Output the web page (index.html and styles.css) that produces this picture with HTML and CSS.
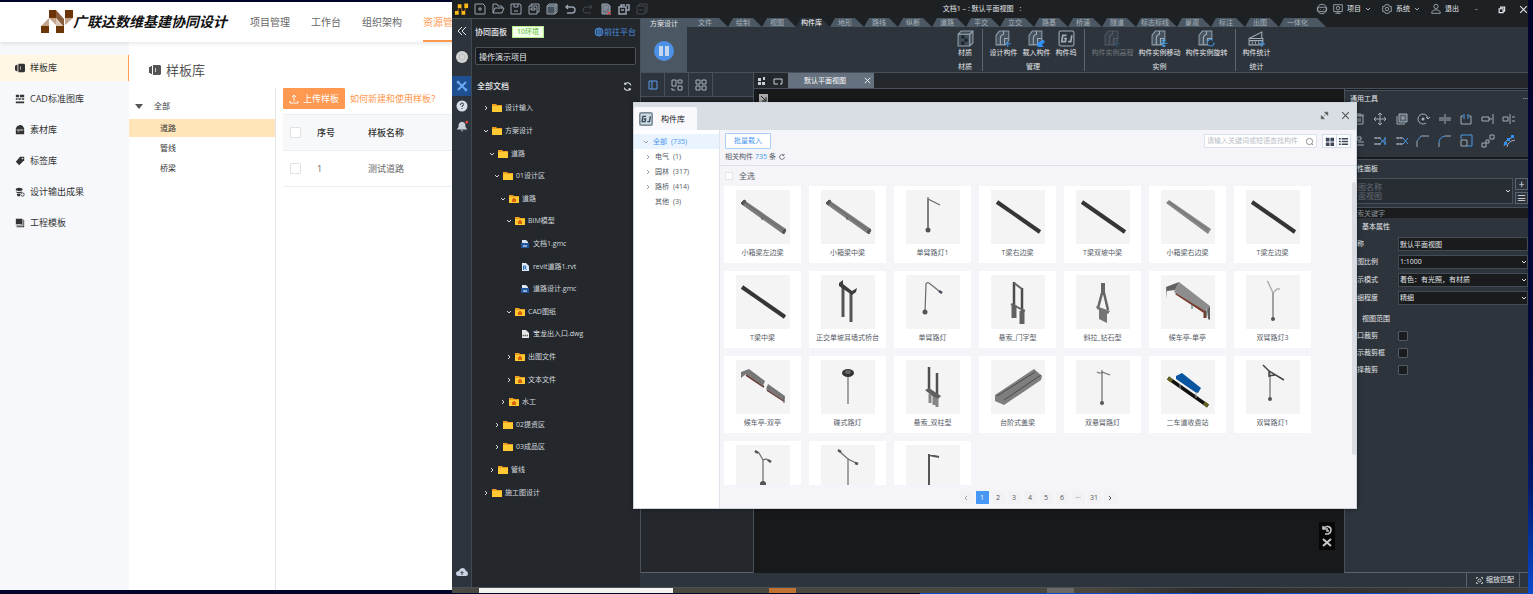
FILE: index.html
```html
<!DOCTYPE html>
<html lang="zh-CN">
<head>
<meta charset="utf-8">
<meta name="viewport" content="width=device-width, initial-scale=1">
<title>广联达数维基建协同设计</title>
<link rel="stylesheet" href="styles.css">
</head>
<body>
<svg class="defs" aria-hidden="true">
  <defs>
    <symbol id="down" viewBox="0 0 8 8"><path d="M2 3l2 2 2-2" class="s"/></symbol>
    <symbol id="right" viewBox="0 0 8 8"><path d="M3 2l2 2-2 2" class="s"/></symbol>
    <symbol id="left" viewBox="0 0 8 8"><path d="M5 2L3 4l2 2" class="s"/></symbol>
    <symbol id="close" viewBox="0 0 10 10"><path d="M2 2l6 6M8 2l-6 6" class="s"/></symbol>
    <symbol id="folder" viewBox="0 0 10 10"><path d="M0 1h4l1 1h5v7H0z" fill="#f0a020"/><path d="M0 3h10v6H0z" fill="#ffc933"/></symbol>
    <symbol id="lockfolder" viewBox="0 0 10 10"><path d="M0 1h4l1 1h5v7H0z" fill="#f0a020"/><path d="M0 3h10v6H0z" fill="#ffc933"/><path d="M3 5h4v3H3zM4 4h2v1H4z" fill="#d9650a"/></symbol>
    <symbol id="gmc" viewBox="0 0 8 10"><path d="M1 1h4l2 2v2H1z" fill="#dbe6f3"/><path d="M0 4h8v5H0z" fill="#1f569d"/><path d="M2 7h4" stroke="#fff" stroke-width="1"/></symbol>
    <symbol id="rvt" viewBox="0 0 8 10"><path d="M1 1h4l3 3v5H1z" fill="#dbe8f6"/><path d="M2.500 8V4h2q1 1 0 2h-2M4 6l1.500 2" stroke="#2a6fc0" fill="none"/></symbol>
    <symbol id="dwg" viewBox="0 0 8 10"><path d="M1 1h4l3 3v5H1z" fill="#e7e7e7"/><path d="M1.500 6.500h6" stroke="#666" stroke-width="1.500" stroke-dasharray="1.500 .5"/></symbol>
    <symbol id="gj" viewBox="0 0 16 16"><rect x="1" y="1" width="14" height="14" rx="1.500" class="s"/><path d="M8 5H4.500L3.500 11H7l.5-3H5.500M13 5l-1 6H9.500" class="s" stroke-width="1.600"/></symbol>
    <symbol id="cube" viewBox="0 0 16 16"><path d="M1 4l3-3h11v11l-3 3H1z" fill="#414d58" stroke="#909eab"/><path d="M1 4h11v11M12 4l3-3" class="s"/></symbol>
    <symbol id="part" viewBox="0 0 16 16"><path d="M1 5l3-4h9v9l-3 4H1z" fill="#46535f" stroke="#8e9caa"/><path d="M5 14V8q0-3 3-4V1M9 14V8h4" class="s"/></symbol>
    <symbol id="cube-check" viewBox="0 0 16 16"><use href="#cube"/><path d="M4 5h3v3H4zM7 8h3v3H7zM4 11h3v3H4z" fill="#1e252c"/></symbol>
    <symbol id="part-plus" viewBox="0 0 16 16"><use href="#part"/><path d="M12 10v6M9 13h6" stroke="#3d8fe0"/></symbol>
    <symbol id="part-load" viewBox="0 0 16 16"><use href="#part"/><path d="M9 10l2 2 3-3 2 2-3 3 2 2H9z" fill="#2f8ffb"/></symbol>
    <symbol id="part-move" viewBox="0 0 16 16"><use href="#part"/><path d="M12 9v7M8.500 12.500h7M10.500 10.500L12 9l1.500 1.500M10.500 14.500L12 16l1.500-1.500" stroke="#4aa0e8" fill="none"/></symbol>
    <symbol id="part-turn" viewBox="0 0 16 16"><use href="#part"/><circle cx="12" cy="12" r="3" stroke="#3d8fe0" fill="#2d343c" stroke-dasharray="7 2"/></symbol>
    <symbol id="stat" viewBox="0 0 16 16"><path d="M1 14V8h13v6zM1 8l12-6v6M4 11v2M7 11v2M10 11v2M1 10h13" class="s"/><path d="M13 10v6M10 13h6" stroke="#3d8fe0"/></symbol>
    <symbol id="refresh" viewBox="0 0 10 10"><path d="M2 6a3 3 0 0 0 5.500 1M8 4a3 3 0 0 0-5.500-1M7.500 8.500V7H6M2.500 1.500V3H4" class="s"/></symbol>
    <symbol id="reload" viewBox="0 0 10 10"><path d="M8 5a3 3 0 1 1-1-2.200M7.500 1v2h-2" class="s"/></symbol>
    <symbol id="album" viewBox="0 0 12 12"><path d="M4 1h7l1 1v8l-1 1H4zM2 2h1v8H2l-1-1V3zM0 3h1v6H0z" fill="currentColor"/><path d="M6 4h1v4H6z" fill="#fff" opacity=".7"/></symbol>
    <symbol id="globe" viewBox="0 0 10 10"><circle cx="5" cy="5" r="4" class="s"/><path d="M1 5h8M5 1v8M2 2.500q3 2 6 0M2 7.500q3-2 6 0M5 1q-4 4 0 8M5 1q4 4 0 8" class="s" stroke-width=".7"/></symbol>

    <symbol id="beam" viewBox="0 0 54 54"><path d="M8 10l42 29-3 5L5 14z" fill="#7b7b7b"/><path d="M8 12l39 28" stroke="#686868"/><path d="M5 13l3-3 2 1-3 4zM46 42l3-3 1 1-2 4zM26 27v3" fill="#555" stroke="#555"/></symbol>
    <symbol id="beam-light" viewBox="0 0 54 54"><path d="M8 10l42 29-3 5L5 13z" fill="#858585"/><path d="M8 12l39 28" stroke="#757575"/></symbol>
    <symbol id="tbeam" viewBox="0 0 54 54"><path d="M6 12l43 30" stroke="#353535" stroke-width="4"/></symbol>
    <symbol id="lamp1" viewBox="0 0 54 54"><path d="M22 7v33M22 9l12 6" class="p"/><path d="M22 9v31" class="p" stroke-width="2"/><circle cx="22" cy="40" r="2.500" fill="#555"/></symbol>
    <symbol id="lamp2" viewBox="0 0 54 54"><path d="M19 37l1-28q1-2 3-1l10 8" class="p"/><path d="M33 16l3 2" stroke="#445" stroke-width="2.500"/><circle cx="19" cy="37" r="2.500" fill="#555"/></symbol>
    <symbol id="pier" viewBox="0 0 54 54"><path d="M22 12v30M30 18v29" stroke="#555" stroke-width="3"/><path d="M18 8l4-3v4l9 7 5-3-1 4-4 3-13-9z" fill="#3d3d3d"/></symbol>
    <symbol id="gate" viewBox="0 0 54 54"><path d="M23 7v24M31 13v24" stroke="#4b4b4b" stroke-width="2.500"/><path d="M23 8l8 6M20 29l14 7" stroke="#666" stroke-width="2"/><path d="M23 30v13M31 36v13" stroke="#606060" stroke-width="5"/></symbol>
    <symbol id="stay" viewBox="0 0 54 54"><path d="M27 8v12" stroke="#666" stroke-width="4"/><path d="M26 18l-4 15M28 18l4 17" stroke="#666" stroke-width="2.500" fill="none"/><path d="M20 31l14 5-2 3-11-5zM23 35l8 3v10l-8-4z" fill="#757575"/></symbol>
    <symbol id="shelter" viewBox="0 0 54 54"><path d="M15 18l29 19v6" fill="none" stroke="#793b2b" stroke-width="3"/><path d="M18 7l31 24-5 5L13 17z" fill="#8d8d8d"/><path d="M5 12l13-5-4 8-8 1v8zM46 34l3-3v14l-2-1z" fill="#616161"/><path d="M31 30v4M45 35v6" stroke="#376b65"/></symbol>
    <symbol id="twin3" viewBox="0 0 54 54"><path d="M27 18l-5-11-1-1M27 18l4-4h3" fill="none" stroke="#b0b0b0" stroke-width="1.500"/><path d="M27 18v26" class="p" stroke-width="2"/><circle cx="27" cy="44" r="2" fill="#555"/></symbol>
    <symbol id="shelter2" viewBox="0 0 54 54"><path d="M10 15l18 12M31 30l17 11" stroke="#6d3c30" stroke-width="2"/><path d="M5 12l8-3 16 12-2 5-17-12-5 4zM32 24l17 12-1 5-18-12z" fill="#777"/><path d="M48 37v6" stroke="#555"/></symbol>
    <symbol id="dish" viewBox="0 0 54 54"><path d="M27 16v28" class="p" stroke-width="2"/><ellipse cx="27" cy="13" rx="6" ry="4" fill="#343434"/><ellipse cx="27" cy="12" rx="3" ry="2" fill="#666"/></symbol>
    <symbol id="twoposts" viewBox="0 0 54 54"><path d="M23 7v25M31 13v23" stroke="#4f4f4f" stroke-width="2.500"/><path d="M19 30l4-2 12 8-4 4z" fill="#606060"/><path d="M24 34v9M28 37v8M31 38v9" stroke="#858585" stroke-width="3"/></symbol>
    <symbol id="steps" viewBox="0 0 54 54"><path d="M4 35l39-26 8 7-1 4-37 25-9-4z" fill="#7e7e7e"/><path d="M6 36l38-24M13 40l37-25" stroke="#4c4c4c"/></symbol>
    <symbol id="twin-h" viewBox="0 0 54 54"><path d="M26 10v33" class="p" stroke-width="2"/><path d="M26 13h-3l-2-1M26 12l8 3" class="p"/><circle cx="26" cy="43" r="2" fill="#555"/></symbol>
    <symbol id="toll" viewBox="0 0 54 54"><path d="M7 18l40 28" stroke="#111" stroke-width="3.500"/><path d="M7 18l4 3M43 43l4 3" stroke="#66641f" stroke-width="3.500"/><path d="M19 24v5M35 32v6" stroke="#999"/><path d="M15 16l6-3 19 15-3 5-3-1-19-13z" fill="#0a559f"/></symbol>
    <symbol id="twin1" viewBox="0 0 54 54"><path d="M24 13v25" class="p" stroke-width="2"/><path d="M17 5l6 6 15 9M23 11v5l6-1" fill="none" stroke="#444" stroke-width="1.500"/><circle cx="24" cy="39" r="2" fill="#555"/></symbol>
    <symbol id="twin-a" viewBox="0 0 54 54"><path d="M27 14v26M19 6l4 2 4 7 3-1 5 3" class="p"/><path d="M19 6l3 2M32 15l3 2" stroke="#555" stroke-width="2.500"/><circle cx="27" cy="39" r="3" fill="#555"/></symbol>
    <symbol id="twin-b" viewBox="0 0 54 54"><path d="M27 13v28M18 6l9 8 10 5" class="p"/><path d="M17 5l3 2M34 18l3 1" stroke="#555" stroke-width="2.500"/></symbol>
    <symbol id="lamp3" viewBox="0 0 54 54"><path d="M23 9v31M23 10l10 2" fill="none" stroke="#555" stroke-width="2"/></symbol>
  </defs>
</svg>

<main class="desktop">
<section class="site">
  <header class="site-head">
    <svg class="brand-mark" viewBox="0 0 32 24"><path d="M8 0h7v8H8zM24 0h8v8h-8zM0 16h8v7H0zM15 16h8v7h-8z" fill="#6b3508"/><path d="M8 8v8H0zM8 8h7v7zM24 8h8l-8 7z" fill="#c3a48c"/><path d="M15 0l8 9v7h-1l-7-8z" fill="#8a5e3c"/><path d="M15 8l7 8h-7z" fill="#dac7b8"/></svg>
    <h1 class="brand">广联达数维基建协同设计</h1>
    <nav class="site-nav"><a href="#">项目管理</a><a href="#">工作台</a><a href="#">组织架构</a><a href="#" class="on">资源管理</a></nav>
  </header>
  <div class="site-body">
    <nav class="site-side">
      <a href="#" class="on"><svg><use href="#album"/></svg>样板库</a>
      <a href="#"><svg viewBox="0 0 12 12"><path d="M1 1h4v3H1zM6 1h5v3H6zM1 5h2v2H1zM4 5h3v2H4zM8 5h3v2H8zM1 9h10v2H1z" fill="currentColor"/></svg>CAD标准图库</a>
      <a href="#"><svg viewBox="0 0 12 12"><path d="M3 1h6l2 3v7H1V4zM5 0h3v2H5z" fill="currentColor"/><path d="M2 6h8M4 8h1" stroke="#fff"/></svg>素材库</a>
      <a href="#"><svg viewBox="0 0 12 12"><path d="M6 1l5 0v4l-6 6-4-4z" fill="currentColor"/><circle cx="9" cy="3" r="1" fill="#fff"/></svg>标签库</a>
      <a href="#"><svg viewBox="0 0 12 12"><path d="M1 2q4-2 8 0v2q-4 2-8 0zM1 5q3 2 7 0v2q-3 1-6 0zM2 8h4v3H3z" fill="currentColor"/><circle cx="9" cy="9" r="2" fill="none" stroke="currentColor"/></svg>设计输出成果</a>
      <a href="#"><svg viewBox="0 0 12 12"><path d="M1 1h8v8H1zM10 2h1v9H2v-1h8z" fill="currentColor"/><path d="M1 8h7" stroke="#fff"/></svg>工程模板</a>
    </nav>
    <div class="site-main">
      <h2><svg><use href="#album"/></svg>样板库</h2>
      <div class="split">
        <ul class="cats"><li class="root"><svg viewBox="0 0 8 8"><path d="M0 2h8L4 7z" fill="#555"/></svg>全部</li><li class="on">道路</li><li>管线</li><li>桥梁</li></ul>
        <div class="templates">
          <div class="actions"><button><svg viewBox="0 0 10 10"><path d="M5 7V1M3 3l2-2 2 2M1 7v2h8V7" class="s"/></svg>上传样板</button><a href="#">如何新建和使用样板？</a></div>
          <table>
            <thead><tr><th class="pick"><input type="checkbox" aria-label="全选"></th><th class="num">序号</th><th>样板名称</th></tr></thead>
            <tbody><tr><td><input type="checkbox" aria-label="测试道路"></td><td>1</td><td>测试道路</td></tr></tbody>
          </table>
        </div>
      </div>
    </div>
  </div>
</section>

<section class="app">
  <header class="titlebar">
    <div class="quick">
      <svg class="logo" viewBox="0 0 16 14"><path d="M3 11l3-7 4 7 4-7" stroke="#b8740b" fill="none"/><path d="M1 9h4v4H1zM4 2h4v4H4zM8 9h4v4H8zM11 1h4v5h-4z" fill="#fbb91b"/></svg>
      <button aria-label="新建"><svg viewBox="0 0 14 14"><path d="M2 2h8l2 2v8H2zM5 7h4M7 5v4" class="s"/></svg></button>
      <button aria-label="打开"><svg viewBox="0 0 14 14"><path d="M2 11V2h4l1 2h4v2M2 11l2-5h9l-2 5z" class="s"/></svg></button>
      <button aria-label="保存"><svg viewBox="0 0 14 14"><path d="M2 2h9l1 1v9H2zM5 2v3h4V2M5 9h4" class="s"/></svg></button>
      <button aria-label="另存为"><svg viewBox="0 0 14 14"><path d="M2 4h8v8H2zM4 4V2h8v8h-2M4 6h4v2H4z" class="s"/></svg></button>
      <button aria-label="全部保存"><svg viewBox="0 0 14 14"><path d="M2 4l2-2h8v8l-2 2H2z" fill="#46525c"/><path d="M2 4l2-2h8v8l-2 2H2zM2 4h8v8M10 4l2-2" class="s"/></svg></button>
      <button aria-label="撤销"><svg viewBox="0 0 14 14"><path d="M3 5h6q3 0 3 3t-3 3H4M5 3L3 5l2 2" class="s" stroke-width="1.400"/></svg></button>
      <button aria-label="重做" class="off"><svg viewBox="0 0 14 14"><path d="M11 5H5q-3 0-3 3t3 3h5M9 3l2 2-2 2" class="s"/></svg></button>
      <button aria-label="关闭文档"><svg viewBox="0 0 14 14"><path d="M3 2h6l2 2v8H3z" fill="#6c7883"/><path d="M3 2h6l2 2v8H3zM5 5h4M5 7h3" class="s"/><path d="M8 9l4 4M12 9l-4 4" stroke="#d84b4b"/></svg></button>
      <button aria-label="上传"><svg viewBox="0 0 14 14"><path d="M2 5h7v7H2zM4 5V3h4M9 8h3V3H9M4 8h3" class="s" stroke-width="1.500"/></svg></button>
      <button aria-label="同步" class="off"><svg viewBox="0 0 14 14"><path d="M2 4h8v8H2zM4 4V2h8v8h-2M4 8h4" class="s"/></svg></button>
    </div>
    <div class="doc-title">文档1 – : 默认平面视图 <span>:</span></div>
    <div class="sys">
      <button aria-label="助手"><svg viewBox="0 0 14 14"><circle cx="7" cy="7" r="5.500" class="s"/><rect x="2" y="5" width="10" height="5" rx="2" class="s"/><path d="M5 7v1M9 7v1" class="s"/></svg></button>
      <button><svg viewBox="0 0 14 14"><path d="M2 2h10v8H2zM4 12h6M7 10v2" class="s"/><circle cx="7" cy="6" r="2" class="s"/></svg>项目<svg class="chev"><use href="#down"/></svg></button>
      <button><svg viewBox="0 0 14 14"><path d="M5 2h4l1 2h2v6h-2l-1 2H5l-1-2H2V4h2z" class="s"/><circle cx="7" cy="7" r="2" class="s"/></svg>系统<svg class="chev"><use href="#down"/></svg></button>
      <button><svg viewBox="0 0 14 14"><circle cx="7" cy="4" r="2.500" class="s"/><path d="M2 12q0-4 5-4t5 4z" class="s"/></svg>退出</button>
      <button class="win" aria-label="最小化">-</button>
      <button class="win" aria-label="还原"><svg viewBox="0 0 14 14"><path d="M4 6h5v5H4zM6 6V4h5v5H9" class="s" stroke-width="1.500"/></svg></button>
      <button class="win" aria-label="关闭"><svg><use href="#close"/></svg></button>
    </div>
  </header>

  <div class="app-body">
    <nav class="rail">
      <button aria-label="收起"><svg viewBox="0 0 12 12"><path d="M6 2L2 6l4 4M10 2L6 6l4 4" class="s"/></svg></button>
      <button aria-label="用户" class="avatar"><svg viewBox="0 0 12 12"><circle cx="6" cy="6" r="6" fill="#d3d3d3"/><circle cx="6" cy="6" r="3" fill="none" stroke="#bbb"/></svg></button>
      <button aria-label="协同" class="on"><svg viewBox="0 0 12 12"><path d="M2 2l8 8M10 2l-8 8M1 3l2-2M9 11l2-2" stroke="#69a9f5" stroke-width="2"/></svg></button>
      <button aria-label="帮助"><svg viewBox="0 0 12 12"><circle cx="6" cy="6" r="5.500" fill="#d8dee6"/><path d="M4.500 5q0-2 1.500-2t1.500 1.500T6 6v1M6 8v1" stroke="#2d343c" fill="none"/></svg></button>
      <button aria-label="通知"><svg viewBox="0 0 14 12"><path d="M1 10l2-3V5q0-3 4-4 4 1 4 4v2l2 3zM6 11h2v1H6z" fill="#c6ced9"/><circle cx="12.500" cy="1.500" r="1.500" fill="#f44"/></svg></button>
      <button aria-label="云同步" class="cloud"><svg viewBox="0 0 12 12"><path d="M3 10Q0 10 0 7.500T3 5q1-3 4-3 2 0 3 3 2 0 2 2.500T10 10z" fill="#c9d3e3"/><path d="M6 9V6M4.500 7L6 5.500 7.500 7" stroke="#2d343c" fill="none"/></svg></button>
    </nav>

    <aside class="collab">
      <div class="collab-head"><b>协同面板</b><span class="badge">10环境</span><a href="#"><svg><use href="#globe"/></svg>前往平台</a></div>
      <input class="project" aria-label="项目" value="操作演示项目">
      <div class="docs-head"><b>全部文档</b><svg><use href="#refresh"/></svg></div>
      <ul class="docs">
        <li><svg class="chev"><use href="#right"/></svg><svg><use href="#folder"/></svg>设计输入</li>
        <li><svg class="chev"><use href="#down"/></svg><svg><use href="#folder"/></svg>方案设计</li>
        <li class="l1"><svg class="chev"><use href="#down"/></svg><svg><use href="#folder"/></svg>道路</li>
        <li class="l2"><svg class="chev"><use href="#down"/></svg><svg><use href="#folder"/></svg>01设计区</li>
        <li class="l3"><svg class="chev"><use href="#down"/></svg><svg><use href="#lockfolder"/></svg>道路</li>
        <li class="l4"><svg class="chev"><use href="#down"/></svg><svg><use href="#lockfolder"/></svg>BIM模型</li>
        <li class="l5"><svg><use href="#gmc"/></svg>文档1.gmc</li>
        <li class="l5"><svg><use href="#rvt"/></svg>revit道路1.rvt</li>
        <li class="l5"><svg><use href="#gmc"/></svg>道路设计.gmc</li>
        <li class="l4"><svg class="chev"><use href="#down"/></svg><svg><use href="#lockfolder"/></svg>CAD图纸</li>
        <li class="l5"><svg><use href="#dwg"/></svg>宝龙出入口.dwg</li>
        <li class="l4"><svg class="chev"><use href="#right"/></svg><svg><use href="#lockfolder"/></svg>出图文件</li>
        <li class="l4"><svg class="chev"><use href="#right"/></svg><svg><use href="#lockfolder"/></svg>文本文件</li>
        <li class="l3"><svg class="chev"><use href="#right"/></svg><svg><use href="#lockfolder"/></svg>水工</li>
        <li class="l2"><svg class="chev"><use href="#right"/></svg><svg><use href="#folder"/></svg>02提资区</li>
        <li class="l2"><svg class="chev"><use href="#right"/></svg><svg><use href="#folder"/></svg>03成品区</li>
        <li class="l1"><svg class="chev"><use href="#right"/></svg><svg><use href="#folder"/></svg>管线</li>
        <li><svg class="chev"><use href="#right"/></svg><svg><use href="#folder"/></svg>施工图设计</li>
      </ul>
    </aside>

    <div class="work">
      <div class="ribbon">
        <button class="stage">方案设计<svg viewBox="0 0 20 20"><circle cx="10" cy="10" r="10" fill="#4d91e6"/><path d="M5 5h4v10H5zM11 5h4v10h-4z" fill="#c5d8ef"/></svg></button>
        <div class="ribbon-main">
          <nav class="tabs"><a href="#" class="first">文件</a><a href="#">绘制</a><a href="#">视图</a><a href="#" class="wide on">构件库</a><a href="#">地形</a><a href="#">路线</a><a href="#">纵断</a><a href="#">道路</a><a href="#">平交</a><a href="#">立交</a><a href="#">路基</a><a href="#">桥涵</a><a href="#">隧道</a><a href="#" class="wide">标志标线</a><a href="#">景观</a><a href="#">标注</a><a href="#">出图</a><a href="#" class="long">一体化</a></nav>
          <div class="groups">
            <div class="group"><div class="tools"><button><svg><use href="#cube-check"/></svg>材质</button></div><span>材质</span></div>
            <div class="group"><div class="tools"><button><svg><use href="#part-plus"/></svg>设计构件</button><button><svg><use href="#part-load"/></svg>载入构件</button><button><svg><use href="#gj"/></svg>构件坞</button></div><span>管理</span></div>
            <div class="group"><div class="tools"><button disabled><svg><use href="#part-plus"/></svg>构件实例高程</button><button><svg><use href="#part-move"/></svg>构件实例移动</button><button><svg><use href="#part-turn"/></svg>构件实例旋转</button></div><span>实例</span></div>
            <div class="group"><div class="tools"><button><svg><use href="#stat"/></svg>构件统计</button></div><span>统计</span></div>
          </div>
        </div>
      </div>
      <div class="stagearea">
        <div class="browser">
          <div class="modes"><button class="on" aria-label="分栏"><svg viewBox="0 0 12 12"><path d="M2 2h8v8H2zM5 2v8" class="s"/></svg></button><button aria-label="布局"><svg viewBox="0 0 12 12"><path d="M1 1h4v6H1zM7 1h4v3H7zM7 7h4v4H7zM1 9v2h3" class="s"/></svg></button><button aria-label="网格"><svg viewBox="0 0 12 12"><path d="M1 1h4v4H1zM7 1h4v4H7zM1 7h4v4H1zM7 7h4v4H7z" class="s"/></svg></button></div>
          <div class="browser-body"></div>
        </div>
        <div class="views">
          <div class="viewtabs">
            <svg viewBox="0 0 12 12"><path d="M2 3h3v3H2zM2 7h3v3H2zM6 7h3v3H6zM7 2h2v3H7z" fill="#c9d0d8"/></svg>
            <svg viewBox="0 0 12 12"><path d="M2 4h8v5H8M6 9H2V4" class="s"/></svg>
            <div class="viewtab">默认平面视图<button aria-label="关闭视图"><svg><use href="#close"/></svg></button></div>
          </div>
          <div class="viewrow">
            <div class="canvas">
              <svg class="pin" viewBox="0 0 9 9"><path d="M0 0h9v9H0z" fill="#aaa"/><path d="M2 2l5 5V3M7 7H3" stroke="#222" fill="none"/></svg>
              <div class="float"><svg viewBox="0 0 12 12"><path d="M2 2v3h3M2 5q2-3 5-2.500T10 6t-3 4H4M6 4v3h2" class="s" stroke-width="1.500"/></svg><svg viewBox="0 0 12 12"><path d="M2 3l8 7M10 3l-8 7" class="s" stroke-width="2"/></svg></div>
            </div>
            <aside class="props">
              <section class="common">
                <div class="panel-head">通用工具<span>···</span></div>
                <div class="toolgrid">
                  <svg viewBox="0 0 14 14"><path d="M3 4h8v8H3zM2 3h10M5 2h4M6 6v4M8 6v4" class="s"/></svg>
                  <svg viewBox="0 0 14 14"><path d="M7 1v12M1 7h12M5 3l2-2 2 2M5 11l2 2 2-2M3 5L1 7l2 2M11 5l2 2-2 2" class="s"/></svg>
                  <svg viewBox="0 0 14 14"><path d="M4 2h8v8H4z" fill="#596571"/><path d="M4 2h8v8H4zM2 4v8h8M8 4v4M6 6h4" class="s"/></svg>
                  <svg viewBox="0 0 14 14"><path d="M12 7a5 5 0 1 0-2 4M10 5l2 2 2-2" class="s"/><circle cx="7" cy="7" r="1.500" fill="currentColor"/></svg>
                  <svg viewBox="0 0 14 14"><path d="M1 6h5M1 8h5M8 6h5M8 8h5M7 2v10" class="s"/></svg>
                  <svg viewBox="0 0 14 14"><path d="M4 4H2v8h10V4h-2" class="s"/><path d="M5 2v5M9 2v5" stroke="#4a9ae6"/></svg>
                  <svg viewBox="0 0 14 14"><path d="M1 5h7v4H1zM12 2v10M8 7h3" class="s"/></svg>
                  <svg viewBox="0 0 14 14"><path d="M1 5h5v4H1zM8 2v10M10 5h3M10 9h3" class="s"/></svg>
                  <svg viewBox="0 0 14 14"><path d="M3 2v9h9M5 3h4v3H5zM6 8h6" class="s"/></svg>
                  <svg viewBox="0 0 14 14"><path d="M1 4h7M1 10h7M3 3v2M3 9v2M6 3v2M6 9v2" class="s"/><path d="M7 4q2 3 6 6M7 10q2-3 6-6M12 3v8" stroke="#4a9ae6" fill="none"/></svg>
                  <svg viewBox="0 0 14 14"><path d="M1 4h7M1 10h7M3 3v2M3 9v2M6 3v2M6 9v2" class="s"/><path d="M8 4l5 6M8 10l5-6" stroke="#4a9ae6" fill="none"/></svg>
                  <svg viewBox="0 0 14 14"><path d="M5 2h8M1 7v6" class="s"/><path d="M1 7l4-5" stroke="#4a9ae6"/></svg>
                  <svg viewBox="0 0 14 14"><path d="M7 2h6M1 9v4" class="s"/><path d="M1 9q0-6 6-7" stroke="#4a9ae6" fill="none"/></svg>
                  <svg viewBox="0 0 14 14"><path d="M2 6h6v6H2z" class="s"/><path d="M2 5V1h11v11H8" stroke="#4a9ae6" fill="none"/></svg>
                  <svg viewBox="0 0 14 14"><path d="M1 9h4v4H1zM5 6h3v3H5zM9 1h4v4H9z" class="s"/></svg>
                  <svg viewBox="0 0 14 14"><path d="M2 12q1-7 10-9M5 13q1-6 8-7" class="s"/><path d="M2 8h3v3H2zM5 4h3v3H5zM9 1h3v3H9z" fill="#2f8ffb"/></svg>
                </div>
              </section>
              <section class="attrs">
                <div class="panel-head">属性面板</div>
                <div class="picker"><button class="pickview"><span>视图名称<br>平面视图</span><svg><use href="#down"/></svg></button><div class="pickbtns"><button>+</button><button>≡</button></div></div>
                <input class="search" aria-label="搜索" placeholder="搜索关键字">
                <h3>基本属性</h3>
                <div class="field"><label for="vn">名称</label><input id="vn" value="默认平面视图"></div>
                <div class="field"><label for="vs">视图比例</label><select id="vs"><option>1:1000</option></select><svg><use href="#down"/></svg></div>
                <div class="field"><label for="vm">显示模式</label><select id="vm"><option>着色：有光照，有材质</option></select><svg><use href="#down"/></svg></div>
                <div class="field"><label for="vd">详细程度</label><select id="vd"><option>精细</option></select><svg><use href="#down"/></svg></div>
                <h3>视图范围</h3>
                <div class="field check"><label for="c1">视口裁剪</label><input id="c1" type="checkbox"></div>
                <div class="field check"><label for="c2">显示裁剪框</label><input id="c2" type="checkbox"></div>
                <div class="field check"><label for="c3">选择裁剪</label><input id="c3" type="checkbox"></div>
              </section>
            </aside>
          </div>
        </div>
      </div>
      <footer class="status"><button><svg viewBox="0 0 12 12"><path d="M2 4V2h2M8 2h2v2M10 8v2H8M4 10H2V8" class="s"/><circle cx="6" cy="6" r="2" class="s"/></svg>缩放匹配</button></footer>
    </div>
  </div>
  <div class="taskbar"><i class="t1"></i><i class="t2"></i><i class="t3"></i></div>

  <section class="dialog" role="dialog" aria-label="构件库">
    <header class="dialog-head">
      <div class="dialog-tab"><svg><use href="#gj"/></svg>构件库</div>
      <div class="dialog-btns"><button aria-label="缩放"><svg viewBox="0 0 10 10"><path d="M5 2h3v3zM2 5v3h3zM4 6l2-2" fill="currentColor" stroke="currentColor" stroke-width=".5"/></svg></button><button aria-label="关闭"><svg><use href="#close"/></svg></button></div>
    </header>
    <div class="dialog-body">
      <ul class="kinds"><li class="on"><svg><use href="#down"/></svg>全部<span>(735)</span></li><li><svg><use href="#right"/></svg>电气<span>(1)</span></li><li><svg><use href="#right"/></svg>园林<span>(317)</span></li><li><svg><use href="#right"/></svg>路桥<span>(414)</span></li><li><svg></svg>其他<span>(3)</span></li></ul>
      <div class="library">
        <div class="filters">
          <div class="bulk"><button>批量载入</button><p>相关构件 <b>735</b> 条 <svg><use href="#reload"/></svg></p></div>
          <div class="find"><label><input aria-label="查找构件" placeholder="请输入关键词或短语查找构件"><svg viewBox="0 0 10 10"><circle cx="5" cy="5" r="3.500" class="s"/><path d="M7 7l2 2" class="s"/></svg></label>
          <div class="toggle"><button aria-label="网格"><svg viewBox="0 0 12 12"><path d="M2 2h4v4H2zM7 2h4v4H7zM2 7h4v4H2zM7 7h4v4H7z" fill="currentColor"/></svg></button><button aria-label="列表"><svg viewBox="0 0 12 12"><path d="M1 3h2M1 6h2M1 9h2M4 3h7M4 6h7M4 9h7" stroke="currentColor" stroke-width="1.500"/></svg></button></div></div>
        </div>
        <div class="results">
          <label class="all"><input type="checkbox">全选</label>
          <div class="cards">
            <figure><svg><use href="#beam"/></svg><figcaption>小箱梁左边梁</figcaption></figure>
            <figure><svg><use href="#beam"/></svg><figcaption>小箱梁中梁</figcaption></figure>
            <figure><svg><use href="#lamp1"/></svg><figcaption>单臂路灯1</figcaption></figure>
            <figure><svg><use href="#tbeam"/></svg><figcaption>T梁右边梁</figcaption></figure>
            <figure><svg><use href="#tbeam"/></svg><figcaption>T梁双坡中梁</figcaption></figure>
            <figure><svg><use href="#beam-light"/></svg><figcaption>小箱梁右边梁</figcaption></figure>
            <figure><svg><use href="#tbeam"/></svg><figcaption>T梁左边梁</figcaption></figure>
            <figure><svg><use href="#tbeam"/></svg><figcaption>T梁中梁</figcaption></figure>
            <figure><svg><use href="#pier"/></svg><figcaption>正交单坡耳墙式桥台</figcaption></figure>
            <figure><svg><use href="#lamp2"/></svg><figcaption>单臂路灯</figcaption></figure>
            <figure><svg><use href="#gate"/></svg><figcaption>悬索_门字型</figcaption></figure>
            <figure><svg><use href="#stay"/></svg><figcaption>斜拉_钻石型</figcaption></figure>
            <figure><svg><use href="#shelter"/></svg><figcaption>候车亭-单亭</figcaption></figure>
            <figure><svg><use href="#twin3"/></svg><figcaption>双臂路灯3</figcaption></figure>
            <figure><svg><use href="#shelter2"/></svg><figcaption>候车亭-双亭</figcaption></figure>
            <figure><svg><use href="#dish"/></svg><figcaption>碟式路灯</figcaption></figure>
            <figure><svg><use href="#twoposts"/></svg><figcaption>悬索_双柱型</figcaption></figure>
            <figure><svg><use href="#steps"/></svg><figcaption>台阶式盖梁</figcaption></figure>
            <figure><svg><use href="#twin-h"/></svg><figcaption>双悬臂路灯</figcaption></figure>
            <figure><svg><use href="#toll"/></svg><figcaption>二车道收费站</figcaption></figure>
            <figure><svg><use href="#twin1"/></svg><figcaption>双臂路灯1</figcaption></figure>
            <figure><svg><use href="#twin-a"/></svg></figure>
            <figure><svg><use href="#twin-b"/></svg></figure>
            <figure><svg><use href="#lamp3"/></svg></figure>
          </div>
          <i class="thumb"></i>
        </div>
        <nav class="pager"><button aria-label="上一页" disabled><svg><use href="#left"/></svg></button><button class="on">1</button><button>2</button><button>3</button><button>4</button><button>5</button><button>6</button><button>···</button><button>31</button><button aria-label="下一页"><svg><use href="#right"/></svg></button></nav>
      </div>
    </div>
  </section>
</section>
</main>
</body>
</html>
```
FILE: styles.css
```css
* { box-sizing: border-box; }
html, body { height: 100%; }
body, h1, h2, h3, p, ul, figure { margin: 0; padding: 0; }
body { font-family: "Open Sans", "Noto Sans CJK SC", sans-serif; font-size: 7px; line-height: 10px; overflow: hidden; }
ul { list-style: none; }
a { color: inherit; text-decoration: none; }
button, input, select { font: inherit; color: inherit; background: none; border: 0; border-radius: 0; padding: 0; margin: 0; }
input[type="checkbox"] { appearance: none; flex: none; width: 11px; height: 11px; background: #fff; border: 1px solid #e0e2e6; border-radius: 1px; display: block; }
svg { display: block; flex: none; }
.defs { position: absolute; width: 0; height: 0; }
.s { fill: none; stroke: currentColor; }
.p { fill: none; stroke: #6a6a6a; stroke-width: 1.200; }

.desktop { position: relative; height: 100%; min-height: 594px; background: linear-gradient(180deg, #00042a 0, #000a3c 60%, #001a6a 82%, #0a4bd0 100%); }

/* collaboration web site */
.site { position: absolute; z-index: 1; left: 0; top: 0; bottom: 0; right: 40%; border: solid #00042a; border-width: 2px 0 4px; background: #fff; display: flex; flex-direction: column; overflow: hidden; color: #333; }
.site-head { height: 40px; flex: none; display: flex; align-items: center; padding-left: 41px; box-shadow: 0 1px 5px rgba(0,0,0,.12); z-index: 1; white-space: nowrap; }
.brand-mark { width: 32px; height: 24px; }
.brand { font-size: 14px; line-height: 20px; font-style: italic; font-weight: 700; color: #111; }
.site-nav { display: flex; gap: 21px; margin-left: 23px; align-self: stretch; font-size: 10px; line-height: 40px; color: #666; }
.site-nav .on { color: #ff9850; border-bottom: 2px solid #ff9850; }
.site-body { flex: 1; display: flex; }
.site-side { width: 129px; flex: none; background: #f7f8fb; padding-top: 13px; display: flex; flex-direction: column; gap: 5px; font-size: 9px; }
.site-side a { height: 26px; display: flex; align-items: center; gap: 5px; padding-left: 15px; }
.site-side svg { width: 10px; height: 10px; }
.site-side .on { background: #fff6e3; border-right: 1px solid #ff9850; }
.site-main { flex: 1; display: flex; flex-direction: column; padding-top: 18px; min-width: 0; }
.site-main h2 { font-size: 13px; line-height: 20px; font-weight: 400; color: #555; display: flex; align-items: center; gap: 5px; padding-left: 20px; }
.site-main h2 svg { width: 12px; height: 12px; }
.split { flex: 1; display: flex; margin-top: 8px; }
.cats { width: 147px; flex: none; border-right: 1px solid #e3e5e9; font-size: 8px; padding-top: 9px; }
.cats li { height: 18px; margin-bottom: 2px; padding-left: 31px; display: flex; align-items: center; }
.cats .root { padding-left: 6px; gap: 11px; margin-bottom: 4px; }
.cats svg { width: 8px; height: 8px; }
.cats .on { background: #ffe5b8; }
.templates { flex: 1; padding-left: 7px; font-size: 9px; min-width: 0; }
.actions { display: flex; gap: 5px; align-items: center; color: #ff9850; white-space: nowrap; }
.actions button { height: 21px; background: #ff9850; color: #fff; border-radius: 1px; padding: 0 6px; display: flex; align-items: center; gap: 4px; }
.actions svg { width: 10px; height: 10px; }
.templates table { width: 100%; margin-top: 5px; border-collapse: collapse; table-layout: fixed; }
.templates th, .templates td { height: 36px; text-align: left; padding: 0; border-bottom: 1px solid #eceef1; color: #666; }
.templates th { background: #f7f8fa; color: #333; font-weight: 500; border-top: 1px solid #eceef1; }
.templates td:first-child, .templates .pick { width: 34px; padding-left: 7px; }
.templates .num { width: 51px; }

/* design application */
.app { position: absolute; z-index: 2; left: 452px; right: 5px; top: 0; bottom: 1px; background: #1f2226; color: #e4e7ea; display: flex; flex-direction: column; white-space: nowrap; }
.titlebar { height: 18px; flex: none; display: flex; align-items: center; background: #1e2124; }
.quick { flex: 1; display: flex; gap: 4px; padding-left: 2px; color: #98a3ae; }
.quick svg { width: 14px; height: 14px; }
.quick .logo { width: 15px; }
.quick .off { opacity: .3; }
.doc-title { flex: none; padding-right: 18px; }
.doc-title span { margin-left: 4px; }
.sys { flex: 1; display: flex; align-items: center; justify-content: flex-end; gap: 9px; }
.sys button { display: flex; align-items: center; gap: 3px; }
.sys button:first-child { margin-right: -5px; }
.sys svg { width: 12px; height: 12px; color: #a7b0ba; }
.sys .chev { width: 8px; height: 8px; }
.sys .win { width: 17px; justify-content: center; }
.sys .win + .win { margin-left: -1px; }
.sys .win svg { color: #e4e7ea; width: 11px; height: 11px; }
.sys .win:last-child { width: 10px; }
.app-body { flex: 1; display: flex; min-height: 0; border-bottom: 1px solid #48515b; }
.rail { width: 20px; flex: none; background: #2d343c; border-top: 1px solid #48515b; border-right: 1px solid #414951; display: flex; flex-direction: column; align-items: center; padding: 2px 0 6px; }
.rail button { width: 100%; height: 20px; display: flex; align-items: center; justify-content: center; }
.rail svg { width: 12px; height: 12px; }
.rail button:first-child { margin: 0 0 6px; }
.rail .avatar { margin-bottom: 9px; }
.rail .on { background: #1d4f91; }
.rail .cloud { margin-top: auto; height: 18px; }
.collab { width: 168px; flex: none; background: #24282d; border-top: 1px solid #48515b; padding: 7px 4px 0 3px; }
.collab-head { display: flex; align-items: center; font-size: 8px; height: 12px; }
.collab b { font-weight: 500; font-size: 8px; }
.badge { margin-left: 5px; height: 12px; padding: 0 4px; font-size: 7px; background: #f3ffe9; border: 1px solid #b7eb8f; color: #52b62a; }
.collab-head a { margin-left: auto; display: flex; align-items: center; color: #4a8bdc; }
.collab-head svg { width: 10px; height: 10px; }
.project { width: 161px; height: 18px; margin-top: 9px; border: 1px solid #4b5259; border-radius: 2px; background: #191b1e; font-size: 8px; padding: 0 3px; display: block; }
.docs-head { display: flex; justify-content: space-between; align-items: center; padding: 0 3px 0 2px; margin-top: 14px; height: 14px; }
.docs-head svg { width: 11px; height: 11px; }
.docs { display: grid; grid-auto-rows: 1fr; height: 407px; margin-top: 4px; }
.docs li { display: flex; align-items: center; padding-left: 7px; gap: 3px; color: #d5d9dd; }
.docs svg { width: 10px; height: 10px; }
.docs .chev { width: 8px; height: 8px; margin-right: -1px; }
.docs .l1 { padding-left: 13px; }
.docs .l2 { padding-left: 18px; }
.docs .l3 { padding-left: 24px; }
.docs .l4 { padding-left: 30px; }
.docs .l5 { padding-left: 45px; }

.work { flex: 1; min-width: 0; display: flex; flex-direction: column; background: #2d343c; }
.ribbon { height: 55px; flex: none; display: flex; border-bottom: 1px solid #48515b; border-left: 1px solid #48515b; }
.stage { width: 46px; background: #4b5763; display: flex; flex-direction: column; align-items: center; gap: 12px; padding-top: 1px; }
.stage svg { width: 20px; height: 20px; }
.ribbon-main { flex: 1; display: flex; flex-direction: column; min-width: 0; }
.tabs { display: flex; height: 9px; background: #1e2124; line-height: 9px; color: #a9b3bc; }
.tabs a { padding: 0 12px 0 8px; background: #4b5863; clip-path: polygon(5px 0, calc(100% - 9px) 0, 100% 100%, 0 100%); }
.tabs .first { padding: 0 16px 0 11px; clip-path: polygon(0 0, calc(100% - 9px) 0, 100% 100%, 0 100%); }
.tabs .wide { padding: 0 8px 0 5px; }
.tabs .long { padding-right: 18px; }
.tabs .on { background: #2d343c; color: #fff; }
.groups { flex: 1; display: flex; justify-content: center; padding: 2px 0 1px 12px; }
.group { display: flex; flex-direction: column; align-items: center; justify-content: space-between; padding: 0 7px; border-right: 1px solid #596673; }
.group:first-child { padding: 0 8px 0 0; }
.group:last-child { border: 0; padding-right: 0; }
.group > span { line-height: 9px; }
.tools { display: flex; gap: 5px; }
.tools button { display: flex; flex-direction: column; align-items: center; line-height: 9px; gap: 1px; padding-top: 1px; }
.tools button:disabled { opacity: .35; }
.tools svg { width: 17px; height: 17px; color: #a1adb8; }

.stagearea { flex: 1; display: flex; min-height: 0; }
.browser { width: 114px; flex: none; display: flex; flex-direction: column; border-left: 1px solid #48515b; border-right: 1px solid #48515b; }
.modes { display: flex; height: 24px; flex: none; border-bottom: 1px solid #48515b; color: #aab3bc; }
.modes button { width: 24px; border-right: 1px solid #48515b; display: flex; align-items: center; justify-content: center; }
.modes .on { color: #5a9be8; }
.modes svg { width: 12px; height: 12px; }
.browser-body { flex: 1; background: #24282d; border-bottom: 1px solid #59646f; }
.views { flex: 1; min-width: 0; display: flex; flex-direction: column; }
.viewtabs { height: 16px; flex: none; display: flex; align-items: center; background: #24272b; border-bottom: 1px solid #48515b; padding-left: 2px; color: #c9d0d8; }
.viewtabs > svg { width: 12px; height: 12px; margin-right: 4px; }
.viewtab { width: 86px; height: 15px; background: #65717e; display: flex; align-items: center; justify-content: space-between; padding: 0 2px 0 16px; color: #fff; }
.viewtab svg { width: 9px; height: 9px; }
.viewrow { flex: 1; display: flex; min-height: 0; }
.canvas { flex: 1; background: #18191b; position: relative; }
.pin { width: 9px; height: 9px; position: absolute; left: 5px; top: 5px; }
.float { position: absolute; right: 9px; bottom: 23px; width: 16px; height: 28px; background: #070707; display: flex; flex-direction: column; align-items: center; justify-content: center; color: #c8c8c8; }
.float svg { width: 12px; height: 12px; }
.props { width: 184px; flex: none; border-left: 1px solid #48515b; display: flex; flex-direction: column; gap: 2px; background: #18191b; border-bottom: 1px solid #59646f; padding-top: 1px; }
.common, .attrs { background: #2d343c; border-top: 1px solid #48515b; }
.common { height: 67px; flex: none; }
.attrs { flex: 1; padding-left: 5px; }
.panel-head { height: 16px; display: flex; justify-content: space-between; align-items: center; padding-left: 5px; }
.attrs .panel-head { padding-left: 0; height: 18px; }
.toolgrid { display: grid; grid-template-columns: repeat(8, 1fr); row-gap: 8px; justify-items: center; padding: 5px 8px 0 3px; color: #a3adb7; }
.toolgrid svg { width: 14px; height: 14px; }
.picker { display: flex; gap: 2px; height: 26px; }
.pickview { flex: 1; display: flex; align-items: center; justify-content: space-between; border: 1px solid #48515b; border-left: 0; background: #282d33; color: #626a73; font-size: 8px; line-height: 9px; text-align: left; }
.pickview svg { width: 8px; height: 8px; color: #ddd; }
.pickbtns { width: 13px; display: flex; flex-direction: column; gap: 2px; }
.pickbtns button { flex: 1; border: 1px solid #59646f; line-height: 9px; font-size: 10px; }
.search { display: block; width: 100%; height: 11px; margin-top: 3px; background: #1a1c1e; border-top: 1px solid #48515b; }
.search::placeholder { color: #8b9299; opacity: 1; }
.attrs h3 { font-size: 7px; font-weight: 400; line-height: 16px; padding: 1px 0 0 12px; }
.field { display: flex; align-items: center; height: 17px; position: relative; }
.field label { width: 48px; }
.field input:not([type="checkbox"]), .field select { appearance: none; flex: 1; min-width: 0; height: 14px; background: #191b1d; border: 1px solid #434b54; padding: 0 1px; }
.field select + svg { width: 8px; height: 8px; position: absolute; right: 0; pointer-events: none; }
.field + .field { margin-top: 1px; }
.field + .check { margin-top: 0; }
.field input[type="checkbox"] { width: 10px; height: 10px; background: #1a1c1e; border-color: #545d67; }
.field + h3 { margin-top: 4px; }
.status { height: 14px; flex: none; display: flex; justify-content: flex-end; padding-right: 8px; }
.status button { border: solid #59646f; border-width: 0 1px; display: flex; align-items: center; gap: 2px; padding: 0 5px 0 8px; }
.status svg { width: 9px; height: 9px; }
.taskbar { height: 5px; flex: none; background: linear-gradient(90deg, #4a4840, #4a463c 60%, #2c2a28 70%, #413d38); display: grid; grid-template-columns: 27px 194px 96px 27px 251px 27px; }
.taskbar .t1 { grid-column: 2; background: #f3f2ee; }
.taskbar .t2 { grid-column: 4; background: #c07233; }
.taskbar .t3 { grid-column: 6; background: #6b6963; }

/* component library dialog */
.dialog { position: absolute; left: 181px; right: 171px; top: 102px; bottom: 84px; background: #f4f4f9; border: 1px solid #cfd5dc; color: #555b66; display: flex; flex-direction: column; box-shadow: 0 0 4px rgba(0,0,0,.5); }
.dialog-head { height: 27px; flex: none; background: #d9dee5; display: flex; justify-content: space-between; padding-top: 4px; }
.dialog-tab { width: 63px; background: #f9f9fd; border-radius: 2px 2px 0 0; display: flex; align-items: center; gap: 8px; padding-left: 5px; color: #222; font-size: 8px; }
.dialog-tab svg { width: 14px; height: 14px; color: #34495c; background: #cdd9df; }
.dialog-btns { display: flex; gap: 10px; padding: 3px 5px 0 0; align-items: flex-start; color: #555; }
.dialog-btns svg { width: 11px; height: 11px; }
.dialog-body { flex: 1; display: flex; min-height: 0; }
.kinds { width: 86px; flex: none; background: #fff; border-right: 1px solid #dfe4ec; padding-top: 4px; }
.kinds li { height: 15px; display: flex; align-items: center; gap: 3px; padding-left: 10px; }
.kinds svg { width: 8px; height: 8px; color: #9aa0aa; }
.kinds span { margin-left: 1px; }
.kinds .on { background: #eaf4ff; color: #4797f0; padding-left: 8px; }
.library { flex: 1; min-width: 0; display: flex; flex-direction: column; }
.filters { height: 36px; flex: none; display: flex; justify-content: space-between; padding: 3px 5px 0 5px; border-bottom: 1px solid #dbe2ec; }
.bulk button { height: 16px; width: 46px; border: 1px solid #a9d0fb; background: #fff; color: #4797f0; border-radius: 1px; }
.bulk p { display: flex; align-items: center; gap: 2px; margin-top: 3px; }
.bulk b { font-weight: 400; color: #4797f0; }
.bulk svg { width: 8px; height: 8px; }
.find { display: flex; gap: 5px; padding-top: 1px; height: 15px; }
.find label { display: flex; align-items: center; width: 113px; border: 1px solid #dbe2ee; background: #fff; padding: 0 2px; }
.find input { flex: 1; min-width: 0; }
.find input::placeholder { color: #b9bec8; opacity: 1; }
.find label svg { width: 9px; height: 9px; color: #888; }
.toggle { display: flex; border: 1px solid #d5ddec; background: #fff; }
.toggle button { width: 13px; display: flex; align-items: center; justify-content: center; color: #3d475c; }
.toggle button + button { width: 14px; border-left: 1px solid #d5ddec; }
.toggle svg { width: 11px; height: 11px; }
.results { flex: 1; min-height: 0; overflow: hidden; padding: 4px 4px 0; position: relative; }
.all { display: flex; align-items: center; gap: 6px; height: 12px; font-size: 8px; padding-left: 1px; }
.all input[type="checkbox"] { width: 8px; height: 8px; }
.cards { display: grid; grid-template-columns: repeat(auto-fill, 77px); gap: 8px; margin-top: 4px; }
.cards figure { height: 77px; background: #fff; display: flex; flex-direction: column; align-items: center; padding-top: 4px; gap: 4px; }
.cards svg { width: 54px; height: 54px; background: #f4f4f4; }
.thumb { position: absolute; right: 0; top: 16px; width: 4px; height: 273px; background: #dcdde3; border-radius: 2px; }
.pager { height: 23px; flex: none; display: flex; justify-content: center; align-items: center; gap: 3px; color: #555; padding-top: 2px; }
.pager button { width: 13px; height: 13px; background: #f2f2f4; display: flex; align-items: center; justify-content: center; }
.pager svg { width: 8px; height: 8px; }
.pager button:disabled { opacity: .5; }
.pager .on { background: #4797f5; color: #fff; }
```
